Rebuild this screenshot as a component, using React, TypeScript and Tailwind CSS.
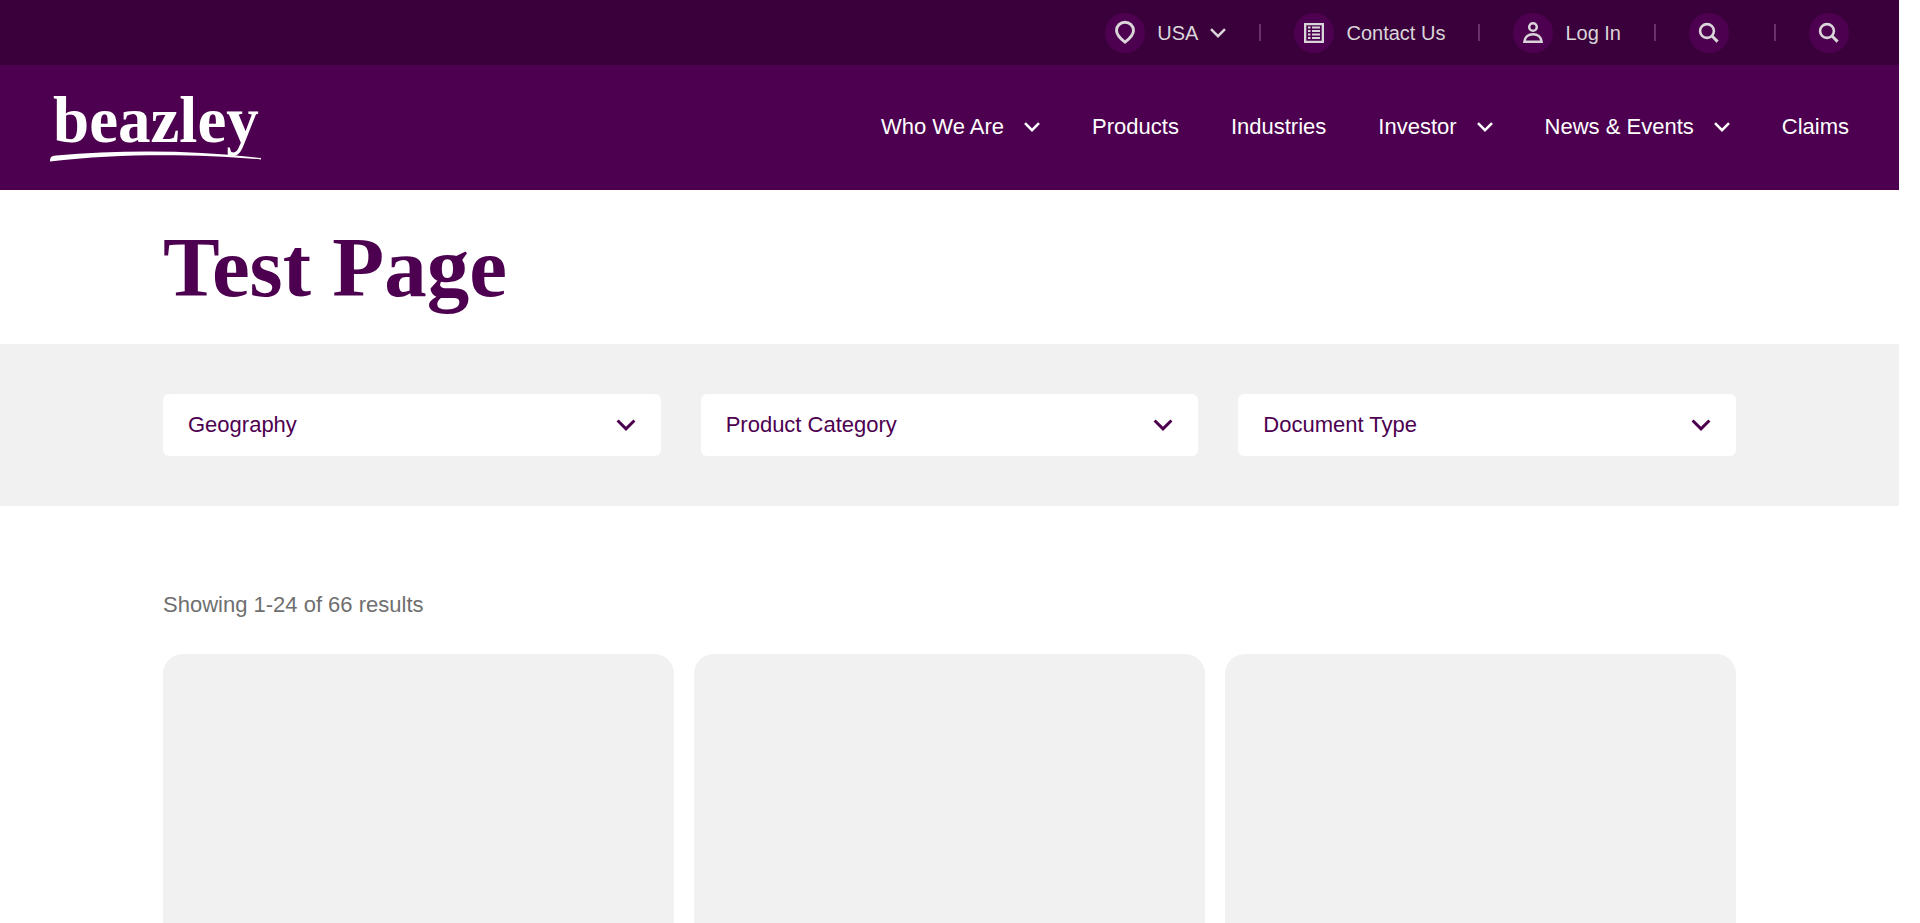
import type { ReactNode } from "react";

type IconProps = { className?: string };

function Chevron({ className }: IconProps) {
  return (
    <svg viewBox="0 0 16 10" fill="none" stroke="currentColor" strokeWidth="2.5" className={className} aria-hidden="true">
      <path d="M1 1.200 8 8.200 15 1.200" />
    </svg>
  );
}

function PinIcon() {
  return (
    <svg viewBox="0 0 40 40" className="size-10" fill="none" stroke="currentColor" strokeWidth="2.9" aria-hidden="true">
      <path d="M20 29.200c-3-2.400-8.500-7-8.500-11.800a8.500 8.200 0 0 1 17 0c0 4.800-5.500 9.400-8.500 11.800Z" />
    </svg>
  );
}

function ListIcon() {
  return (
    <svg viewBox="0 0 40 40" className="size-10" fill="currentColor" aria-hidden="true">
      <path fillRule="evenodd" d="M10 10h20v20H10ZM12.300 12.300v15.400h15.400V12.300Z" />
      <path d="M14 13.500h2.500v2H14zM18 13.500h8v2h-8zM14 17h2.500v2H14zM18 17h8v2h-8zM14 20.500h2.500v2H14zM18 20.500h8v2h-8zM14 24h2.500v2H14zM18 24h8v2h-8z" />
    </svg>
  );
}

function UserIcon() {
  return (
    <svg viewBox="0 0 40 40" className="size-10" fill="none" stroke="currentColor" strokeWidth="2.5" aria-hidden="true">
      <circle cx="20" cy="14" r="3.800" />
      <path d="M11.400 28.700c.5-4.600 3.800-7.500 8.600-7.500s8.100 2.900 8.600 7.500Z" />
    </svg>
  );
}

function SearchIcon() {
  return (
    <svg viewBox="0 0 40 40" className="size-10" fill="none" stroke="currentColor" strokeWidth="2.6" aria-hidden="true">
      <circle cx="18" cy="18" r="6.900" />
      <path d="m23 23 5.600 5.600" strokeWidth="3" />
    </svg>
  );
}

function Disc({ children }: { children: ReactNode }) {
  return <span className="block size-10 rounded-full bg-[#4d004f]">{children}</span>;
}

function Divider() {
  return <span className="h-[17px] w-0.5 bg-[#6a306b]" />;
}

function Logo() {
  return (
    <svg viewBox="0 0 212 70" className="h-[70px] w-[212px] overflow-visible" fill="#fff" aria-hidden="true">
      <text x="3" y="49" fontFamily="'Liberation Serif', serif" fontWeight="700" fontSize="65">
        beazley
      </text>
      <path d="M0 68.500c0-4 1-5.800 6-6.100C70 57 140 56.500 211 65v1.400C150 61 70 60 0 68.500Z" />
    </svg>
  );
}

const navItems = [
  { label: "Who We Are", menu: true },
  { label: "Products", menu: false },
  { label: "Industries", menu: false },
  { label: "Investor", menu: true },
  { label: "News & Events", menu: true },
  { label: "Claims", menu: false },
];

const filters = ["Geography", "Product Category", "Document Type"];

export default function App() {
  return (
    <div className="flex min-h-screen flex-col bg-white pr-[21px] font-['Liberation_Sans',sans-serif]">
      <div className="flex h-[65px] items-center justify-end gap-[33px] bg-[#3a003b] px-[50px] text-xl text-[#d9d5d9]">
        <button type="button" className="flex items-center gap-3">
          <Disc>
            <PinIcon />
          </Disc>
          USA
          <Chevron className="h-2.5 w-4" />
        </button>
        <Divider />
        <a href="#contact" className="flex items-center gap-3">
          <Disc>
            <ListIcon />
          </Disc>
          Contact Us
        </a>
        <Divider />
        <a href="#login" className="flex items-center gap-3">
          <Disc>
            <UserIcon />
          </Disc>
          Log In
        </a>
        <Divider />
        <button type="button" aria-label="Search" className="pr-3">
          <Disc>
            <SearchIcon />
          </Disc>
        </button>
        <Divider />
        <button type="button" aria-label="Search">
          <Disc>
            <SearchIcon />
          </Disc>
        </button>
      </div>

      <header className="flex h-[125px] items-center justify-between bg-[#4d004f] px-[50px] text-white">
        <a href="#home" aria-label="Beazley home">
          <Logo />
        </a>
        <nav className="flex items-center gap-[52px] pb-0.5 text-[22px]">
          {navItems.map((item) =>
            item.menu ? (
              <button key={item.label} type="button" className="flex items-center gap-5">
                {item.label}
                <Chevron className="h-2.5 w-4" />
              </button>
            ) : (
              <a key={item.label} href="#nav">
                {item.label}
              </a>
            ),
          )}
        </nav>
      </header>

      <main className="flex flex-1 flex-col">
        <h1 className="flex h-[154px] items-center px-[163px] font-['Liberation_Serif',serif] text-[85px] leading-none font-bold text-[#4d004f]">
          Test Page
        </h1>

        <form className="grid grid-cols-3 gap-10 bg-[#f1f1f1] px-[163px] py-[50px]">
          {filters.map((name) => (
            <div key={name} className="grid items-center text-[#4d004f]">
              <select
                aria-label={name}
                className="col-start-1 row-start-1 h-[62px] w-full appearance-none rounded-md bg-white px-[25px] pb-0.5 text-[22px]"
              >
                <option>{name}</option>
              </select>
              <Chevron className="pointer-events-none col-start-1 row-start-1 mr-[25px] h-3 w-5 justify-self-end" />
            </div>
          ))}
        </form>

        <section className="flex flex-1 flex-col px-[163px] pt-[81px]">
          <p className="text-[22px] leading-9 text-[#6f6f6f]">Showing 1-24 of 66 results</p>
          <div className="mt-[31px] grid flex-1 grid-cols-3 gap-5">
            <div className="rounded-t-[20px] bg-[#f1f1f1]" />
            <div className="rounded-t-[20px] bg-[#f1f1f1]" />
            <div className="rounded-t-[20px] bg-[#f1f1f1]" />
          </div>
        </section>
      </main>
    </div>
  );
}
